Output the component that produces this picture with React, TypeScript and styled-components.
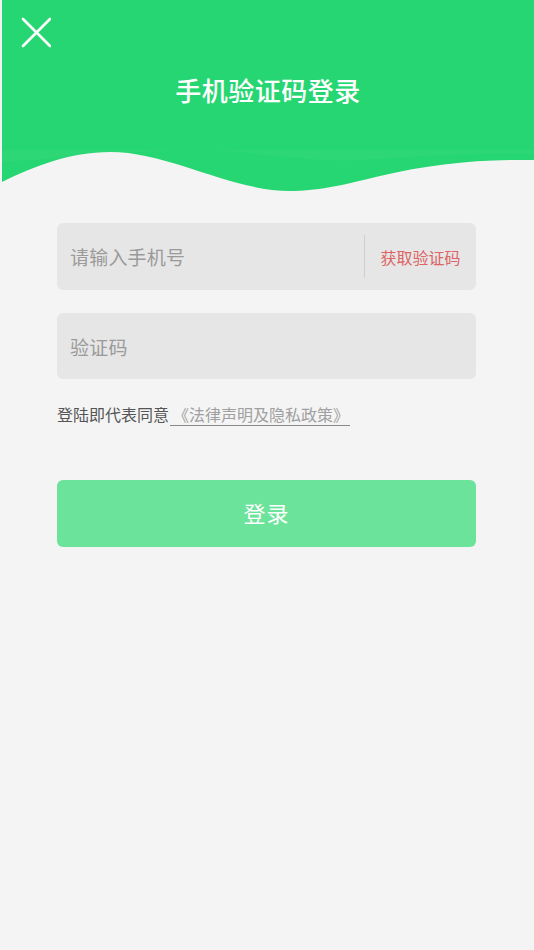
import React from "react";
import styled, { createGlobalStyle } from "styled-components";

const Global = createGlobalStyle`
  html, body { margin: 0; padding: 0; background: #f4f4f4; }
  body { font-family: "Noto Sans CJK SC", "Noto Sans", sans-serif; }
  #root { min-height: 950px; background: #f4f4f4; }
`;

const Page = styled.div`
  width: 534px;
  min-height: 950px;
  background: #f4f4f4;
  display: flex;
  flex-direction: column;
`;

const Header = styled.header`
  margin-left: 2px;
  display: flex;
  flex-direction: column;
`;

const HeaderTop = styled.div`
  position: relative;
  height: 150px;
  background: #26d672;
  display: flex;
  flex-direction: column;
  align-items: center;
`;

const CloseButton = styled.button`
  position: absolute;
  left: 17px;
  top: 16px;
  width: 32px;
  height: 32px;
  padding: 0;
  border: none;
  background: transparent;
  display: flex;
  align-items: center;
  justify-content: center;
`;

const Title = styled.h1`
  margin: 71px 0 0;
  font-size: 26px;
  line-height: 38px;
  font-weight: 500;
  color: #ffffff;
  letter-spacing: 0.5px;
`;

const Wave = styled.svg`
  display: block;
  width: 532px;
  height: 42px;
`;

const Form = styled.main`
  padding: 31px 58px 0 57px;
  display: flex;
  flex-direction: column;
`;

const Field = styled.div<{ $h: number; $mt?: number }>`
  height: ${(p) => p.$h}px;
  margin-top: ${(p) => p.$mt ?? 0}px;
  background: #e6e6e6;
  border-radius: 6px;
  display: flex;
  align-items: center;
  padding-left: 13px;
  box-sizing: border-box;
`;

const Placeholder = styled.span`
  flex: 1;
  font-size: 19px;
  color: #9a9a9a;
  letter-spacing: 0.2px;
`;

const Divider = styled.span`
  width: 1px;
  height: 43px;
  background: #cfcfcf;
`;

const CodeButton = styled.span`
  width: 111px;
  text-align: center;
  font-size: 16px;
  color: #dd6464;
`;

const Agreement = styled.div`
  margin-top: 24px;
  display: flex;
  align-items: flex-start;
  font-size: 16px;
  line-height: 22px;
  color: #555555;
`;

const Link = styled.span`
  margin-left: 1px;
  padding: 0 0 0 3px;
  width: 177px;
  color: #a0a0a0;
  border-bottom: 1px solid #8a8a8a;
  white-space: nowrap;
`;

const Submit = styled.button`
  margin-top: 54px;
  height: 67px;
  border: none;
  border-radius: 6px;
  background: #6ce39b;
  color: #ffffff;
  font-family: "Noto Sans CJK SC", "Noto Sans", sans-serif;
  font-size: 22px;
  line-height: 30px;
  padding: 0 0 4px;
  letter-spacing: 1px;
`;

export default function App() {
  return (
    <Page>
      <Global />
      <Header>
        <HeaderTop>
          <CloseButton aria-label="关闭">
            <svg width="32" height="32" viewBox="0 0 32 32">
              <path
                d="M4 3 L31 30 M31 3 L4 30"
                stroke="#ffffff"
                strokeWidth="2.6"
                strokeLinecap="round"
                fill="none"
              />
            </svg>
          </CloseButton>
          <Title>手机验证码登录</Title>
        </HeaderTop>
        <Wave viewBox="0 0 532 42" preserveAspectRatio="none">
          <path
            d="M0 0 H532 V10 C478 9 428 14 378 26 C338 36 313 41 288 41 C228 41 168 2 108 2 C68 2 33 16 0 32 Z"
            fill="#26d672"
          />
          <path
            d="M0 0 H532 V4 C470 2 420 6 360 10 C300 14 250 -2 180 0 C120 2 60 8 0 12 Z"
            fill="#ffffff"
            opacity="0.035"
          />
        </Wave>
      </Header>
      <Form>
        <Field $h={67}>
          <Placeholder>请输入手机号</Placeholder>
          <Divider />
          <CodeButton>获取验证码</CodeButton>
        </Field>
        <Field $h={66} $mt={23}>
          <Placeholder>验证码</Placeholder>
        </Field>
        <Agreement>
          登陆即代表同意
          <Link>《法律声明及隐私政策》</Link>
        </Agreement>
        <Submit>登录</Submit>
      </Form>
    </Page>
  );
}
